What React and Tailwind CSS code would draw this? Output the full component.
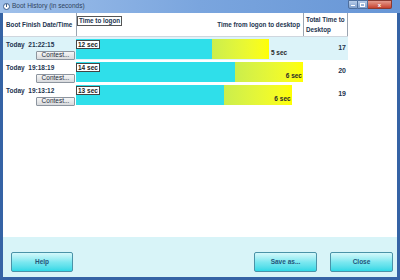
import React from 'react';

const rows = [
  { date: 'Today  21:22:15', logon: 12, desktop: 5, total: 17, selected: true, outside: true },
  { date: 'Today  19:18:19', logon: 14, desktop: 6, total: 20 },
  { date: 'Today  19:13:12', logon: 13, desktop: 6, total: 19 },
];

const PX_PER_SEC = 11.35;

function WinButton({ children, className }) {
  return (
    <button
      className={`h-[20px] rounded-[2px] border border-[#4a93a8] bg-gradient-to-b from-[#d4f8fb] via-[#7ce8f0] to-[#2cd8e6] text-[6.5px] font-bold text-[#24557a] ${className}`}
    >
      {children}
    </button>
  );
}

function App() {
  return (
    <div className="w-[400px] h-[280px] flex flex-col bg-[#3563a5] font-['Liberation_Sans',Arial,sans-serif] text-[#23344f]">
      {/* title bar */}
      <div className="h-[13px] flex items-start bg-gradient-to-r from-[#9fc0ea] via-[#7aa5de] to-[#6796d6]">
        <div className="flex items-center h-[12px] pl-[3px] gap-[2px]">
          <div className="w-[7px] h-[7px] rounded-full bg-white border border-[#3d5f8e] flex items-center justify-center">
            <div className="w-[1px] h-[3px] bg-[#3d5f8e] -mt-[1px]" />
          </div>
          <span className="text-[6.5px] text-[#2f425c]">Boot History (in seconds)</span>
        </div>
        <div className="ml-auto mr-[8px] flex h-[10px]">
          <div className="w-[10px] h-[9px] border border-[#4e6f9d] bg-gradient-to-b from-[#b7cdea] to-[#7f9fcb] rounded-bl-[2px] flex items-end justify-center pb-[2px]">
            <div className="w-[4px] h-[1px] bg-white" />
          </div>
          <div className="w-[10px] h-[9px] border-y border-r border-[#4e6f9d] bg-gradient-to-b from-[#b7cdea] to-[#7f9fcb] flex items-center justify-center">
            <div className="w-[5px] h-[4px] border border-white" />
          </div>
          <div className="w-[24px] h-[9px] border-y border-r border-[#8a3a30] bg-gradient-to-b from-[#e49a8c] to-[#c4402e] rounded-br-[2px] flex items-center justify-center text-[6px] font-bold text-white leading-none">
            x
          </div>
        </div>
      </div>

      {/* client area */}
      <div className="flex-1 flex flex-col mx-[3px] mb-[3px] bg-white">
        <div className="flex-1">
          <div className="w-[345px]">
            {/* header */}
            <div className="flex h-[24px] border-b border-[#cfd6de] text-[6.3px] font-bold">
              <div className="w-[73px] flex items-center pl-[3px] pt-[1px] whitespace-nowrap">Boot Finish Date/Time</div>
              <div className="w-[227px] border-l border-[#9aa4b0] flex items-start justify-between">
                <div className="mt-[3px] border border-[#555] bg-white px-[1px] leading-[8px] h-[10px]">Time to logon</div>
                <div className="mt-[7px] mr-[3px]">Time from logon to desktop</div>
              </div>
              <div className="w-[45px] border-x border-[#9aa4b0] pl-[2px] pt-[2px] leading-[10px] whitespace-nowrap">
                Total Time to
                <br />
                Desktop
              </div>
            </div>

            {/* rows */}
            {rows.map((r) => (
              <div key={r.date} className={`flex h-[23px] text-[6.5px] font-bold ${r.selected ? 'bg-[#dcf3f9]' : 'bg-white'}`}>
                <div className="w-[73px] flex flex-col justify-between pl-[3px] pt-[4px]">
                  <span className="leading-[7px] whitespace-pre">{r.date}</span>
                  <button className="self-end mr-[1px] w-[39px] h-[9px] rounded-[1px] border border-[#8d959f] bg-gradient-to-b from-[#f6f6f6] to-[#d8dadd] text-[6.5px] font-normal leading-none text-[#1c2a3c]">
                    Contest...
                  </button>
                </div>
                <div className="w-[227px] pt-[2px]">
                  <div className="flex h-[20px] relative">
                    <div className="bg-[#2fdfea] h-full" style={{ width: r.logon * PX_PER_SEC }} />
                    <div
                      className="h-full relative bg-gradient-to-r from-[#cbee4c] to-[#ffff00]"
                      style={{ width: r.desktop * PX_PER_SEC }}
                    >
                      <span
                        className={`absolute bottom-[3px] leading-none whitespace-nowrap text-[#2a2a2a] ${r.outside ? 'left-full ml-[2px]' : 'right-[1px]'}`}
                      >
                        {r.desktop} sec
                      </span>
                    </div>
                    <div className="absolute left-0 top-[1px] h-[9px] border border-[#444] bg-white px-[1px] leading-[7px] text-[#222]">
                      {r.logon} sec
                    </div>
                  </div>
                </div>
                <div className="w-[45px] flex items-center justify-end pr-[2px] text-[7px]">{r.total}</div>
              </div>
            ))}
          </div>
        </div>

        {/* footer */}
        <div className="h-[40px] bg-[#d8f4f8] flex items-end pb-[5px] pl-[8px] pr-[4px]">
          <WinButton className="w-[62px]">Help</WinButton>
          <WinButton className="w-[63px] ml-auto">Save as...</WinButton>
          <WinButton className="w-[63px] ml-[13px]">Close</WinButton>
        </div>
      </div>
    </div>
  );
}

export default App;
